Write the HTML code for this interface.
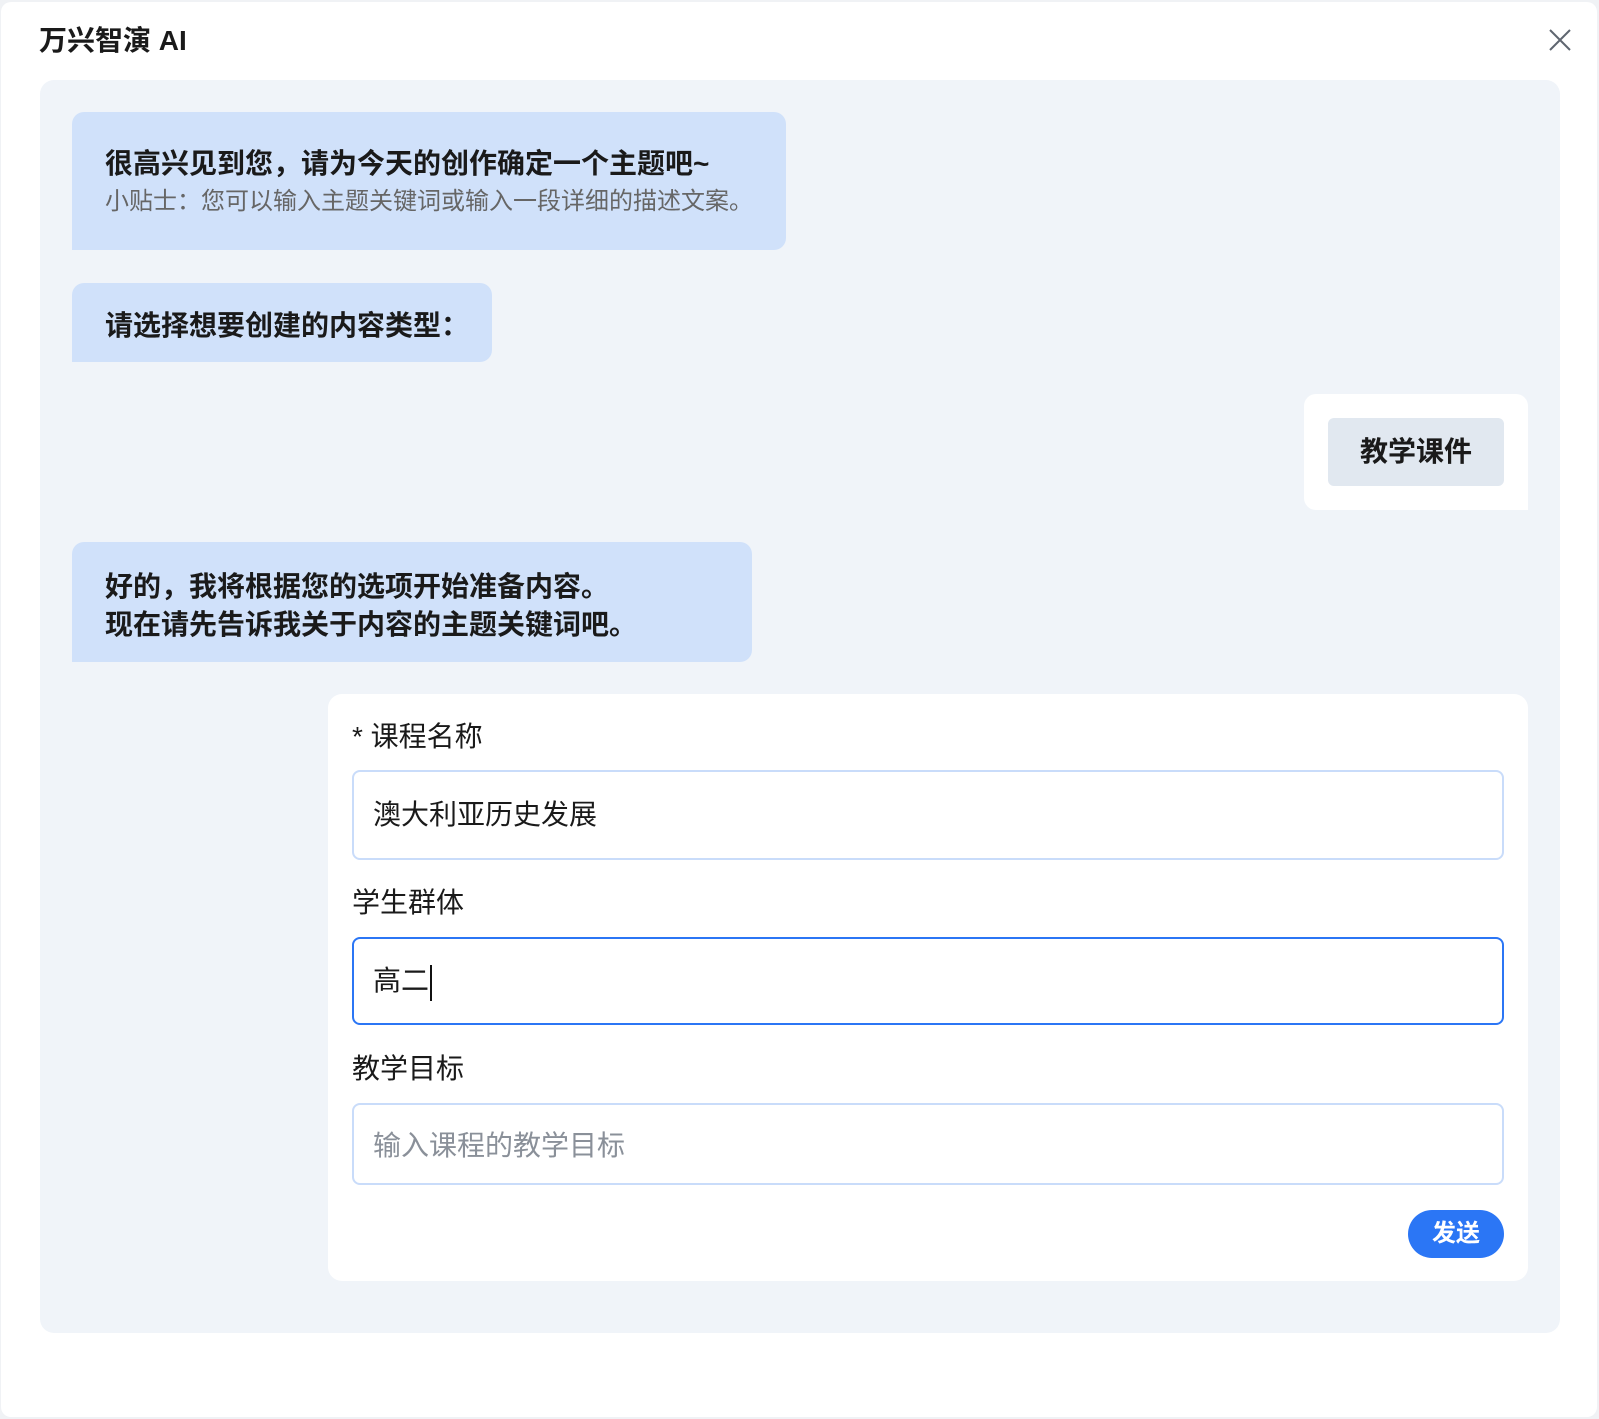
<!DOCTYPE html>
<html><head><meta charset="utf-8"><style>
*{margin:0;padding:0;box-sizing:border-box}
body{width:1599px;height:1419px;background:#f0f2f5;font-family:"Liberation Sans","Noto Sans CJK SC",sans-serif;color:#1a1a1a;position:relative;overflow:hidden}
.win{position:absolute;left:1px;top:2px;width:1596px;height:1415px;background:#fff;border-radius:10px}
.title{position:absolute;left:39px;top:22px;font-size:28px;font-weight:bold;line-height:38px}
.close{position:absolute;left:1549px;top:29px}
.panel{position:absolute;left:40px;top:80px;width:1520px;height:1253px;background:#f0f4f9;border-radius:14px}
.b{position:absolute;background:#d0e1fa;border-radius:12px 12px 12px 0;padding:0 33px}
.b .t{font-size:28px;font-weight:bold;line-height:38px;white-space:nowrap}
.b .s{font-size:24px;color:#666;line-height:38px;white-space:nowrap}
.card{position:absolute;left:1304px;top:394px;width:224px;height:116px;background:#fff;border-radius:12px 12px 0 12px}
.chip{position:absolute;left:24px;top:24px;width:176px;height:68px;background:#e1e8f0;border-radius:6px;font-size:28px;font-weight:bold;text-align:center;line-height:68px}
.form{position:absolute;left:328px;top:694px;width:1200px;height:587px;background:#fff;border-radius:14px}
.lab{position:absolute;left:24px;font-size:28px;line-height:38px}
.inp{position:absolute;left:24px;width:1152px;border:2px solid #c9dcfa;border-radius:8px;font-size:28px;padding-left:19px}
.btn{position:absolute;left:1080px;top:516px;width:96px;height:48px;background:#2b76f5;border-radius:24px;color:#fff;font-size:24px;font-weight:bold;text-align:center;line-height:48px}
</style></head><body>
<div class="win"></div>
<div class="title">万兴智演 AI</div>
<svg class="close" width="22" height="22" viewBox="0 0 22 22"><path d="M1 1L21 21M21 1L1 21" stroke="#5f6670" stroke-width="2"/></svg>
<div class="panel"></div>
<div class="b" style="left:72px;top:112px;width:714px;height:138px;padding-top:33px">
<div class="t">很高兴见到您，请为今天的创作确定一个主题吧~</div>
<div class="s">小贴士：您可以输入主题关键词或输入一段详细的描述文案。</div></div>
<div class="b" style="left:72px;top:283px;width:420px;height:79px;padding-top:24px"><div class="t">请选择想要创建的内容类型：</div></div>
<div class="card"><div class="chip">教学课件</div></div>
<div class="b" style="left:72px;top:542px;width:680px;height:120px;padding-top:26px">
<div class="t">好的，我将根据您的选项开始准备内容。</div>
<div class="t">现在请先告诉我关于内容的主题关键词吧。</div></div>
<div class="form">
<div class="lab" style="top:24px">* 课程名称</div>
<div class="inp" style="top:76px;height:90px;line-height:86px">澳大利亚历史发展</div>
<div class="lab" style="top:190px">学生群体</div>
<div class="inp" style="top:243px;height:88px;line-height:84px;border-color:#2b76f5">高二<span style="display:inline-block;width:2px;height:36px;background:#111;vertical-align:middle;margin-left:1px"></span></div>
<div class="lab" style="top:356px">教学目标</div>
<div class="inp" style="top:409px;height:82px;line-height:82px;color:#8a9099">输入课程的教学目标</div>
<div class="btn">发送</div>
</div>
</body></html>
